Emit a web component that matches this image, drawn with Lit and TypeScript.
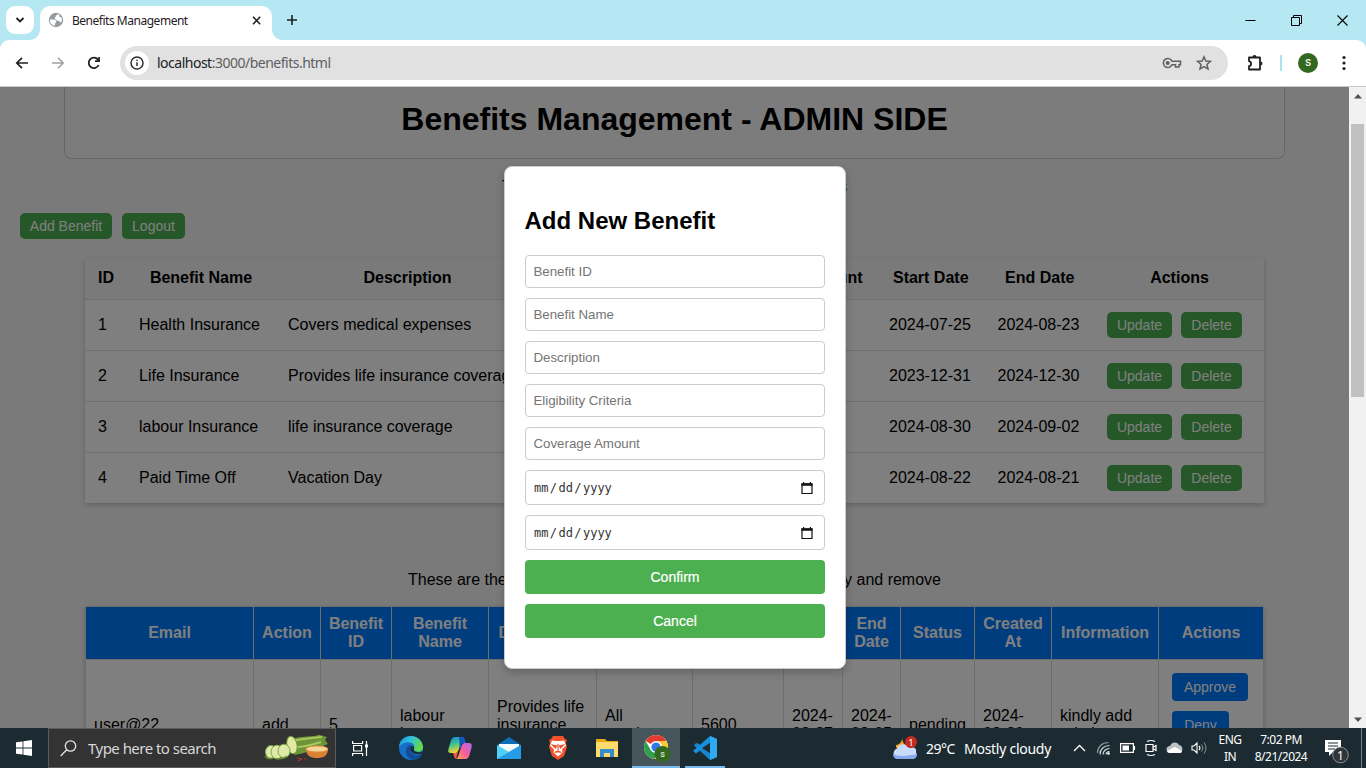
import { LitElement, html, css, svg } from "lit";
import { customElement } from "lit/decorators.js";

@customElement("browser-chrome")
class BrowserChrome extends LitElement {
  static styles = css`
    :host { display: flex; flex-direction: column; height: 87px; flex: none; background: #b5e8f3; font-family: "Noto Sans", "Open Sans", sans-serif; color: #1f2023; }
    svg { display: block; flex: none; }
    .tabs { display: flex; height: 40px; box-sizing: border-box; padding: 6px 0 0 6px; }
    .search { width: 28px; height: 28px; background: #fff; border-radius: 9px; display: flex; align-items: center; justify-content: center; }
    .tab { position: relative; margin-left: 6px; width: 232px; height: 34px; box-sizing: border-box; background: #fff; border-radius: 10px 10px 0 0; display: flex; padding: 6px 10px 0 8px; }
    .tab::before, .tab::after { content: ""; position: absolute; bottom: 0; width: 10px; height: 10px; }
    .tab::before { left: -10px; background: radial-gradient(circle at 0 0, transparent 9.5px, #fff 10px); }
    .tab::after { right: -10px; background: radial-gradient(circle at 100% 0, transparent 9.5px, #fff 10px); }
    .title { margin-left: 8px; flex: 1; font-size: 12px; line-height: 18px; letter-spacing: -0.48px; white-space: nowrap; }
    .close { margin-top: 3px; }
    .plus { margin: 8px 0 0 14px; }
    .win { margin-left: auto; display: flex; gap: 35px; padding: 9px 18px 0 0; }
    .bar { height: 47px; box-sizing: border-box; background: #fff; border-radius: 9px 9px 0 0; border-bottom: 1px solid #c9c9c9; display: flex; align-items: center; padding: 0 13px 1px 14px; }
    .nav { display: flex; gap: 20px; }
    .url { margin-left: 18px; width: 1108px; height: 34px; border-radius: 17px; background: #e1e1e1; display: flex; align-items: center; box-sizing: border-box; padding: 0 16px 0 5px; }
    .info { width: 24px; height: 24px; border-radius: 50%; background: #fff; display: flex; align-items: center; justify-content: center; }
    .addr { margin-left: 8px; font-size: 14px; line-height: 20px; letter-spacing: -0.5px; flex: 1; color: #5d5e60; white-space: nowrap; }
    .addr b { font-weight: 400; color: #202124; }
    .key { margin-right: 14px; }
    .puzzle { margin-left: 17px; }
    .sep { width: 2px; height: 16px; background: #a9e3ef; margin-left: 16px; }
    .avatar { width: 20px; height: 20px; border-radius: 50%; background: #33691e; color: #fff; font: 12px/19px Roboto, sans-serif; text-align: center; margin-left: 16px; }
    .dots { margin-left: 24px; }
  `;
  render() {
    return html`
      <div class="tabs">
        <div class="search"><svg width="10" height="8" viewBox="0 0 10 8"><path d="M1.500 2 5 5.500 8.500 2" fill="none" stroke="#1f2023" stroke-width="1.800"/></svg></div>
        <div class="tab">
          <svg width="16" height="16" viewBox="0 0 16 16"><circle cx="8" cy="8" r="7.200" fill="#969ba1"/><path d="M2 7.400c2 .2 4.800-.5 6 1.300.8 1.600-1 1.700-1 4.800C4 13.500 1.600 11 2 7.400zM8.500 3c.8-.8 2-.9 2.900-.4L11 4.500l2.600 1c.7 1.900.3 4-.8 5.300-.7-1.300-1.500-1.900-3.400-2C7.600 8 6.800 7.300 6.900 6c.1-1.200 1.700-1.500 1.600-3z" fill="#fff"/></svg>
          <span class="title">Benefits Management</span>
          <svg class="close" width="11" height="11" viewBox="0 0 11 11"><path d="m2 1.800 7.200 7.400m0-7.400L2 9.200" stroke="#1f2023" stroke-width="1.600"/></svg>
        </div>
        <svg class="plus" width="12" height="12" viewBox="0 0 12 12"><path d="M6 1v10M1 6h10" stroke="#1f2023" stroke-width="1.600"/></svg>
        <div class="win">
          <svg width="11" height="11" viewBox="0 0 11 11"><path d="M.5 5.500h10" stroke="#000"/></svg>
          <svg width="11" height="11" viewBox="0 0 11 11"><path d="M.5 2.500h8v8h-8zM2.500 2.500v-2h8v8h-2" fill="none" stroke="#000"/></svg>
          <svg width="11" height="11" viewBox="0 0 11 11"><path d="m.5.500 10 10m0-10-10 10" stroke="#000" stroke-width="1.100"/></svg>
        </div>
      </div>
      <div class="bar">
        <div class="nav">
          <svg width="16" height="16" viewBox="0 0 16 16"><path d="M14 8H3M8 2.800 2.800 8 8 13.200" fill="none" stroke="#1f2023" stroke-width="1.700"/></svg>
          <svg width="16" height="16" viewBox="0 0 16 16"><path d="M2 8h11M8 2.800 13.200 8 8 13.200" fill="none" stroke="#9d9ea0" stroke-width="1.500"/></svg>
          <svg width="16" height="16" viewBox="0 0 16 16"><path d="M12.700 10A5.200 5.200 0 1 1 12 4.600L13.300 6" fill="none" stroke="#1f2023" stroke-width="1.800"/><path d="M13.900 2v5H9V5.300h3.200V2z" fill="#1f2023"/></svg>
        </div>
        <div class="url">
          <div class="info"><svg width="14" height="14" viewBox="0 0 14 14"><circle cx="7" cy="7" r="6" fill="none" stroke="#303134" stroke-width="1.500"/><path d="M7 6.300V10M7 3.800v1.300" stroke="#303134" stroke-width="1.500"/></svg></div>
          <span class="addr"><b>localhost</b>:3000/benefits.html</span>
          <svg class="key" width="20" height="12" viewBox="0 0 20 12"><path d="M10 4.200A4.500 4.500 0 1 0 10 7.800h3.500v2.200h3.500V7.800h1.500V4.200z" fill="none" stroke="#5f6164" stroke-width="1.500"/><circle cx="5.700" cy="6" r="2" fill="#5f6164"/></svg>
          <svg width="16" height="16" viewBox="0 0 16 16"><path d="m8 1.800 1.850 4.200 4.600.4-3.500 3 1.050 4.500L8 11.500l-4 2.400 1.050-4.500-3.500-3 4.600-.4z" fill="none" stroke="#5f6164" stroke-width="1.500"/></svg>
        </div>
        <svg class="puzzle" width="19" height="18" viewBox="0 0 19 18"><path d="M4 3.500h11v12H4v-3.300c2.800-.6 2.800-4.400 0-5z" fill="none" stroke="#1f2023" stroke-width="1.800" stroke-linejoin="round"/><path d="M7.500 3a2 2 0 0 1 4 0zM15.500 7.500a2 2 0 0 1 0 4z" fill="#1f2023"/></svg>
        <div class="sep"></div>
        <div class="avatar">s</div>
        <svg class="dots" width="4" height="16" viewBox="0 0 4 16"><g fill="#1f2023"><circle cx="2" cy="2.500" r="1.600"/><circle cx="2" cy="8" r="1.600"/><circle cx="2" cy="13.500" r="1.600"/></g></svg>
      </div>`;
  }
}

const benefits = [
  ["1", "Health Insurance", "Covers medical expenses", "2024-07-25", "2024-08-23"],
  ["2", "Life Insurance", "Provides life insurance coverage", "2023-12-31", "2024-12-30"],
  ["3", "labour Insurance", "life insurance coverage", "2024-08-30", "2024-09-02"],
  ["4", "Paid Time Off", "Vacation Day", "2024-08-22", "2024-08-21"],
];
const requestHeads = ["Email", "Action", "Benefit ID", "Benefit Name", "Description", "Eligibility", "Coverage", "Start Date", "End Date", "Status", "Created At", "Information", "Actions"];
const requestCells = ["user@22", "add", "5", "labour insurance", "Provides life insurance coverage", "All employees", "5600", "2024-08-27", "2024-09-05", "pending", "2024-08-20", "kindly add admin", ""];

@customElement("benefits-page")
class BenefitsPage extends LitElement {
  static styles = css`
    :host { position: relative; display: block; flex: 1; min-width: 0; height: 641px; overflow: hidden; background: #f4f4f4; font: 16px/18px "Liberation Sans", Arial, sans-serif; color: #000; }
    .header { margin: 0 64px; height: 72px; box-sizing: border-box; border: 1px solid #ccc; border-top: 0; border-radius: 0 0 8px 8px; background: #f9f9f9; text-align: center; }
    h1 { margin: 0; padding-top: 12px; font-size: 32px; line-height: 40px; }
    .line { display: flex; justify-content: space-between; margin: 0 auto; white-space: nowrap; }
    .intro { width: 345px; padding-top: 19px; }
    .note { width: 533px; padding-top: 68px; }
    .tools { display: flex; gap: 10px; padding: 17px 0 19px 20px; }
    .btn { box-sizing: border-box; height: 26px; border-radius: 5px; background: #4caf50; color: #fff; font-size: 14px; line-height: 26px; text-align: center; }
    .add { width: 92px; } .logout { width: 63px; } .upd { width: 65px; } .del { width: 61px; }
    .list { margin: 0 85px; width: 1179px; background: #fff; box-shadow: 0 2px 5px rgba(0,0,0,.2); }
    .row { display: grid; grid-template-columns: 41px 149px 264px 172px 165px 108.500px 109.500px 170px; height: 51px; box-sizing: border-box; border-bottom: 1px solid #ddd; align-items: center; }
    .row:last-child { height: 50px; border-bottom: 0; }
    .row > * { padding-left: 13px; white-space: nowrap; }
    .head { height: 42px; background: #f4f4f4; font-weight: 700; }
    .head > * { padding: 0 0 2px 1px; text-align: center; }
    .acts { display: flex; gap: 9px; }
    .req { margin: 17px 85px 0; width: 1179px; border-left: 1px solid #ddd; border-top: 1px solid #ddd; box-sizing: border-box; background: #fff; box-shadow: 0 2px 5px rgba(0,0,0,.2); }
    .rr { display: grid; grid-template-columns: 168px 67px 71px 97px 108px 96px 91px 59px 58px 74px 77px 107px 105px; }
    .rr > * { display: flex; align-items: center; box-sizing: border-box; border-right: 1px solid #ddd; border-bottom: 1px solid #ddd; padding: 0 8px; }
    .rh { height: 53px; background: #007bff; color: #fff; font-weight: 700; }
    .rh > * { justify-content: center; text-align: center; padding: 0 5px; }
    .rb { height: 130px; }
    .rb > .ra { flex-direction: column; align-items: flex-start; justify-content: flex-start; gap: 10px; padding: 13px; }
    .blue { background: #007bff; height: 28px; line-height: 28px; border-radius: 4px; color: #fff; font-size: 14px; text-align: center; }
    .approve { width: 76px; } .deny { width: 57px; }
    .overlay { position: absolute; inset: 0; background: rgba(0,0,0,.5); display: flex; justify-content: center; align-items: flex-start; padding-top: 79px; }
    .modal { width: 342px; height: 503px; box-sizing: border-box; margin-left: 1px; border: 1px solid #ccc; border-radius: 8px; background: #fff; box-shadow: 0 4px 8px rgba(0,0,0,.2); padding: 40px 20px 0; display: flex; flex-direction: column; gap: 10px; }
    h2 { margin: 0 0 11px -.5px; font-size: 24px; line-height: 27px; height: 27px; }
    input, .date { box-sizing: border-box; width: 300px; height: 33px; flex: none; border: 1px solid #ccc; border-radius: 4px; padding: 0 7.500px; margin: 0; font: 13.333px "Liberation Sans", Arial, sans-serif; letter-spacing: -.03px; background: #fff; }
    input::placeholder { color: #757575; }
    .date { height: 35px; display: flex; align-items: center; justify-content: space-between; padding: 1px 11px 0 8px; font: 12px "DejaVu Sans Mono", monospace; color: #333; letter-spacing: 0; }
    .parts { display: flex; gap: 1.400px; }
    .submit { height: 34px; flex: none; border-radius: 4px; background: #4caf50; color: #fff; text-align: center; font-size: 14px; line-height: 34px; -webkit-text-stroke: .2px #fff; }
  `;
  render() {
    const date = html`<div class="date"><span class="parts"><span>mm</span><span>/</span><span>dd</span><span>/</span><span>yyyy</span></span>
      <svg width="12" height="13" viewBox="0 0 12 13"><path d="M1 2h10v9.500H1z" fill="none" stroke="#111" stroke-width="1.200"/><path d="M.4 1.200h11.200v2.500H.4zM2 0h1.200v2H2zm6.800 0H10v2H8.800z" fill="#111"/></svg></div>`;
    return html`
      <div class="header"><h1>Benefits Management - ADMIN SIDE</h1></div>
      <div class="line intro"><span>These are the benefits</span><span>available for employees</span></div>
      <div class="tools"><div class="btn add">Add Benefit</div><div class="btn logout">Logout</div></div>
      <div class="list">
        <div class="row head">${["ID", "Benefit Name", "Description", "Eligibility Criteria", "Coverage Amount", "Start Date", "End Date", "Actions"].map((h) => html`<span>${h}</span>`)}</div>
        ${benefits.map((b) => html`<div class="row"><span>${b[0]}</span><span>${b[1]}</span><span>${b[2]}</span><span></span><span></span><span>${b[3]}</span><span>${b[4]}</span><span class="acts"><span class="btn upd">Update</span><span class="btn del">Delete</span></span></div>`)}
      </div>
      <div class="line note"><span>These are the requests made by</span><span>users, admin can verify and remove</span></div>
      <div class="req">
        <div class="rr rh">${requestHeads.map((h) => html`<span>${h}</span>`)}</div>
        <div class="rr rb">${requestCells.map((c) => c ? html`<span>${c}</span>` : html`<span class="ra"><span class="blue approve">Approve</span><span class="blue deny">Deny</span></span>`)}</div>
      </div>
      <div class="overlay"><div class="modal">
        <h2>Add New Benefit</h2>
        ${["Benefit ID", "Benefit Name", "Description", "Eligibility Criteria", "Coverage Amount"].map((p) => html`<input placeholder=${p}>`)}
        ${date}${date}
        <div class="submit">Confirm</div><div class="submit">Cancel</div>
      </div></div>`;
  }
}

const chromeLogo = svg`<circle cx="12" cy="12" r="12" fill="#fff"/><path d="M12 12 1.600 6A12 12 0 0 1 22.400 6H12z" fill="#e33b2e"/><path d="M12 6h10.400A12 12 0 0 1 12 24l5.200-9z" fill="#fcc934"/><path d="M1.600 6 6.800 15l5.200 3-1 6A12 12 0 0 1 1.600 6z" fill="#2da04b"/><path d="m17.200 15-5.200 9-1.500-.1 3-6z" fill="#fcc934"/><circle cx="12" cy="12" r="6" fill="#fff"/><circle cx="12" cy="12" r="4.600" fill="#3577e5"/>`;

@customElement("task-bar")
class TaskBar extends LitElement {
  static styles = css`
    :host { display: flex; height: 40px; flex: none; background: #1b2b31; color: #fff; font-family: "Noto Sans", "Open Sans", sans-serif; overflow: hidden; }
    svg { display: block; flex: none; }
    .start { width: 48px; display: flex; align-items: center; justify-content: center; }
    .search { width: 288px; box-sizing: border-box; border: 1px solid #5b5b5b; background: #333; display: flex; align-items: center; padding: 0 5px 0 11px; }
    .label { margin-left: 11px; font-size: 15px; letter-spacing: -.53px; color: #d8d8d8; flex: 1; white-space: nowrap; }
    .app { width: 49px; display: flex; align-items: center; justify-content: center; }
    .view { width: 48px; margin-right: 2.500px; }
    .active { width: 48px; box-sizing: border-box; background: #46555a; border-bottom: 2px solid #76b9ed; padding: 2px 0 0 2px; }
    .open { width: 40px; margin-left: 5px; box-sizing: border-box; border-bottom: 2px solid #76b9ed; padding-top: 2px; }
    .weather { margin-left: auto; display: flex; align-items: center; font-size: 14px; white-space: nowrap; }
    .temp { margin-left: 7px; width: 38px; letter-spacing: -.5px; }
    .sky { width: 98px; letter-spacing: -.27px; }
    .tray { display: flex; align-items: center; gap: 8px; margin-left: 11px; }
    .chev { margin-right: 2px; }
    .two { display: flex; flex-direction: column; align-items: center; font-size: 12px; line-height: 17px; letter-spacing: -.5px; padding-top: 3px; white-space: nowrap; }
    .lang { width: 26px; margin-left: 9px; }
    .clock { width: 54px; margin-left: 11px; }
    .notes { margin: 9px 0 0 16px; }
    .edge { width: 1px; margin: 0 4px 0 11px; background: #738084; }
  `;
  render() {
    return html`
      <div class="start"><svg width="16" height="16" viewBox="0 0 16 16"><path d="M0 2.300 6.600 1.400v6.200H0zM7.400 1.300 16 0v7.600H7.400zM0 8.400h6.600v6.200L0 13.700zM7.400 8.400H16V16l-8.600-1.300z" fill="#fff"/></svg></div>
      <div class="search">
        <svg width="17" height="17" viewBox="0 0 17 17"><circle cx="10.500" cy="6" r="5.200" fill="none" stroke="#e4e4e4" stroke-width="1.300"/><path d="M6.700 9.700.7 16" stroke="#e4e4e4" stroke-width="1.300"/></svg>
        <span class="label">Type here to search</span>
        <svg width="66" height="28" viewBox="0 0 66 28"><path d="M24 7C32 2 42 3 50 2c3 0 4-2 6-1l7 2-2 3 3 4-5 2c-8 2-15 7-28 9z" fill="#6d9438"/><path d="M29 7c9-3 20-3 29-4M32 13c10 0 18-3 25-5" fill="none" stroke="#a9c860" stroke-width="2"/><ellipse cx="28" cy="11" rx="5" ry="9" transform="rotate(-12 28 11)" fill="#e3e9a5" stroke="#6a9838"/><g fill="#e0eaa8" stroke="#80a648"><ellipse cx="7" cy="18" rx="5.500" ry="6.500"/><ellipse cx="13" cy="18" rx="6" ry="6.800"/><ellipse cx="20" cy="17" rx="6" ry="6.800"/></g><path d="M1 22c2 3 5 3 8 2M12 25c4 0 8 0 11-3" fill="none" stroke="#628f31" stroke-width="1.500"/><path d="M42 15h22c0 7-5 9-11 9s-11-2-11-9z" fill="#d98133"/><ellipse cx="53" cy="15" rx="11" ry="3" fill="#f7d599" stroke="#e09548"/><path d="M33 24l5 1-4 2m6-3 2 2" stroke="#b83432" fill="none"/></svg>
      </div>
      <div class="app view"><svg width="17" height="17" viewBox="0 0 17 17"><path d="M.6 1v2.500h10V1M.6 16v-2.500h10V16M1.600 5.500h8v5.500h-8zM14.500 1v15" fill="none" stroke="#fff" stroke-width="1.200"/><path d="M13 4.500h3v3h-3z" fill="#fff"/></svg></div>
      <div class="app"><svg width="26" height="26" viewBox="0 0 26 26"><defs><linearGradient id="eg" x1="0" x2="1" y2=".3"><stop stop-color="#1b91d9"/><stop offset=".5" stop-color="#2fc2df"/><stop offset="1" stop-color="#65d84a"/></linearGradient></defs><circle cx="13" cy="13" r="12" fill="#1770c4"/><path d="M1 12C2-2 22-3 25 11c1 5-4 7-8 5-3-2 0-3-1-6C14 6 5 6 1 12z" fill="url(#eg)"/><path d="M10 11c-4 5-2 12 5 14 5 0 8-3 9-6-5 3-11 1-11-4 0-2 1-3 1-4-1-1-3-1-4 0z" fill="#124b96"/><path d="M13 12c2-2 4 0 3 2-1 2 3 4 7 3l2 1c-6 3-14 0-12-6z" fill="#1b2b31"/></svg></div>
      <div class="app"><svg width="26" height="26" viewBox="0 0 26 26"><defs><linearGradient id="ca" x2=".3" y2="1"><stop stop-color="#1683e4"/><stop offset=".5" stop-color="#3bc48d"/><stop offset="1" stop-color="#f7d331"/></linearGradient><linearGradient id="cb" x1="1" x2="0" y2="1"><stop stop-color="#af6bf0"/><stop offset=".5" stop-color="#f65c9b"/><stop offset="1" stop-color="#ffa558"/></linearGradient></defs><path d="M8 2h9c-4 2-4 15-8 16H4c-4 0-3-3-1-9C4 5 5 2 8 2z" fill="url(#ca)"/><path d="M17 8h5c4 0 3 4 1 10-1 4-2 6-5 6H9c4-2 4-15 8-16z" fill="url(#cb)"/><path d="M12 2h5l2 6h-2c-3 0-3 5-4 8z" fill="#1557bf"/><path d="M13 10 9 24c-2-1-2-4-3-6h3c2 0 3-5 4-8z" fill="#f05b43"/></svg></div>
      <div class="app"><svg width="26" height="26" viewBox="0 0 26 26"><path d="M1 10 13 2l12 8v14H1z" fill="#0f6cb8"/><path d="M3 9h20v8H3z" fill="#f4fbff"/><path d="m1 10 12 7 12-7v14H1z" fill="#50d0f6"/><path d="M1 24 25 10v14z" fill="#249ce6"/></svg></div>
      <div class="app"><svg width="22" height="26" viewBox="0 0 22 26"><path d="m6 1 10 0 2 3 2 1-1 3 1 4-3 9-6 4-6-4-3-9 1-4-1-3 2-1z" fill="#f1522b"/><path d="M5 5.500 9 6h4l4-.5 2 5-4 4 .5 3L11 21.500 6.500 17.500l.5-3-4-4z" fill="#fff"/><path d="m5.500 10 4 1-1 2zm11 0-4 1 1 2zM11 9v7m-3.500 1.500L11 16l3.500 1.500" fill="#f1522b" stroke="#f1522b" stroke-width="1.200"/></svg></div>
      <div class="app"><svg width="22" height="20" viewBox="0 0 22 20"><path d="M0 1h9l2 2h11v16H0z" fill="#e8a713"/><path d="M0 4h22v15H0z" fill="#ffda6d"/><path d="M4 11h14v8h-4v-4H8v4H4z" fill="#338dce"/></svg></div>
      <div class="app active"><svg width="28" height="28" viewBox="0 0 28 28"><g transform="translate(1 1)">${chromeLogo}</g><circle cx="19.500" cy="20" r="8" fill="#33691e"/><text x="19.500" y="23" fill="#fff" font-family="Roboto" font-size="9" text-anchor="middle">s</text></svg></div>
      <div class="app open"><svg width="26" height="26" viewBox="0 0 26 26"><path d="M18 1 25 4v18l-7 3L2 10.500 4 8l3 1 11 9z" fill="#1686cf"/><path d="M18 1v7L4 18.500 1 16z" fill="#178fdb"/><path d="m18 1 7 3v18l-7 3z" fill="#30a9f2"/><path d="m18 8-8 5 8 5z" fill="#1b2b31"/></svg></div>
      <div class="weather">
        <svg width="27" height="26" viewBox="0 0 27 26"><path d="M11 1c-2 5 1 10 7 10-4 6-15 5-14-1 4 0 6-4 7-9z" fill="#f5a623"/><path d="M6 24a5.500 5.500 0 0 1-1-10.500C6 9 14 7 17 13c5-2 8 1 7 4 2 4-1 7-4 7z" fill="#c9dcfb"/><path d="M1 19c5 3 15 2 24 0 0 3-2 5-5 5H6c-3 0-5-2-5-5z" fill="#87aaf0"/><circle cx="19" cy="7" r="6" fill="#c42b1c"/><text x="19" y="10.500" text-anchor="middle" font-family="Noto Sans" font-size="9.500" fill="#fff">1</text></svg>
        <span class="temp">29°C</span><span class="sky">Mostly cloudy</span>
      </div>
      <div class="tray">
        <svg class="chev" width="13" height="8" viewBox="0 0 13 8"><path d="m1 7 5.500-5.500L12 7" fill="none" stroke="#fff" stroke-width="1.300"/></svg>
        <svg width="16" height="16" viewBox="0 0 16 16"><g fill="none" stroke="#d3d9da" stroke-width="1.200"><path d="M4 14.500C4 9 8 5.500 13.500 5.500M7 14.500c0-3.500 3-6 6.500-6M10 14.500c0-2 1.500-3 3.500-3"/><path d="M1.500 13C1.500 7 6 2.500 12.500 2.500" stroke="#8c989b"/></g><circle cx="12.500" cy="13.500" r="1.300" fill="#fff"/></svg>
        <svg width="16" height="10" viewBox="0 0 16 10"><path d="M.6.600h12.800v8.800H.6zM14.500 3v4" fill="none" stroke="#fff" stroke-width="1.200"/><path d="M2.500 2.500H9v5H2.500z" fill="#fff"/></svg>
        <svg width="14" height="18" viewBox="0 0 14 18"><path d="M2 5.500h7v7H2zM9.500 8 12 6.500v5L9.500 10M3 2.500q4-2 8 0M3 15.500q4 2 8 0" fill="none" stroke="#fff" stroke-width="1.200"/></svg>
        <svg width="17" height="12" viewBox="0 0 17 12"><path d="M4 11a3.500 3.500 0 0 1 0-7c2-5 8-4 9-1 5 1 4 8 0 8z" fill="#bfc3c4"/><path d="M1 9 9 5l7 4-1 2H3z" fill="#fff"/></svg>
        <svg width="17" height="14" viewBox="0 0 17 14"><path d="M1 5h2l3-3v10L3 9H1zM8 5q2 2 0 4" fill="none" stroke="#fff" stroke-width="1.100"/><path d="M10.500 3.500q3 3.500 0 7M13 1.500q4 5.500 0 11" fill="none" stroke="#8a9598"/></svg>
      </div>
      <div class="two lang"><span>ENG</span><span>IN</span></div>
      <div class="two clock"><span>7:02 PM</span><span>8/21/2024</span></div>
      <svg class="notes" width="26" height="28" viewBox="0 0 26 28"><path d="M1 3h16v12H9l-4 4v-4H1z" fill="#fff"/><path d="M4 6h10M4 9h10M4 12h7" stroke="#1b2b31" stroke-width="1"/><circle cx="16.500" cy="18" r="7.800" fill="#303538" stroke="#899295"/><text x="16.500" y="22.500" text-anchor="middle" font-family="Noto Sans" font-size="12" fill="#fff">1</text></svg>
      <div class="edge"></div>`;
  }
}

@customElement("app-root")
class AppRoot extends LitElement {
  static styles = css`
    :host { display: flex; flex-direction: column; width: 1366px; height: 768px; overflow: hidden; }
    .view { display: flex; height: 641px; flex: none; }
    .scroll { width: 17px; box-sizing: border-box; background: #f1f1f1; display: flex; flex-direction: column; align-items: center; justify-content: space-between; padding: 7px 0 6px; }
    .thumb { width: 13px; height: 273px; background: #c1c1c1; margin: 25px 0 auto; }
    svg { display: block; flex: none; }
  `;
  render() {
    return html`<browser-chrome></browser-chrome>
      <div class="view"><benefits-page></benefits-page>
        <div class="scroll"><svg width="8" height="5" viewBox="0 0 8 5"><path d="m4 0 4 4.500H0z" fill="#505050"/></svg><div class="thumb"></div><svg width="8" height="5" viewBox="0 0 8 5"><path d="M0 .500h8L4 5z" fill="#505050"/></svg></div>
      </div>
      <task-bar></task-bar>`;
  }
}
